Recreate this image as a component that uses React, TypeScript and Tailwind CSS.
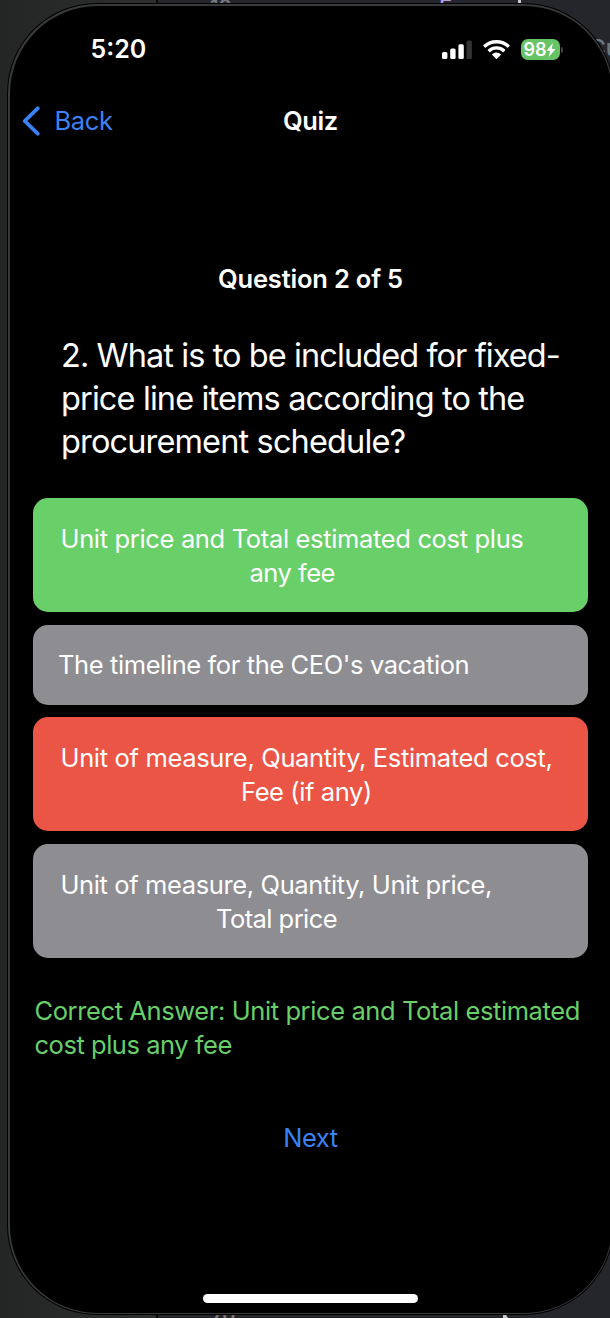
import React from "react";

type Line = { text: string; className: string };

function Lines({ lines }: { lines: Line[] }) {
  return (
    <>
      {lines.map((line) => (
        <span key={line.text} className={`block w-max whitespace-nowrap ${line.className}`}>
          {line.text}
        </span>
      ))}
    </>
  );
}

function Answer({ className, lines }: { className: string; lines: Line[] }) {
  return (
    <button
      className={`flex w-full flex-col justify-center rounded-[15px] pt-px text-[25.5px] leading-[34px] text-white ${className}`}
    >
      <Lines lines={lines} />
    </button>
  );
}

function Backdrop() {
  return (
    <div className="absolute inset-0 flex overflow-hidden">
      <div className="w-[156px] bg-linear-to-r from-[#242625] to-[#2d2f2e]" />
      <div className="w-[2px] bg-[#080809]" />
      <div className="flex-1 bg-[#25252c]" />
      <span className="absolute left-[210px] top-[-3px] text-[20px] leading-[20px] font-semibold text-[#77777d]">10</span>
      <span className="absolute left-[439px] top-[-3px] text-[22px] leading-[20px] font-medium text-[#b79be0]">Form</span>
      <span className="absolute left-[518px] top-0 h-[5px] w-[3px] bg-[#c9c9cc]" />
      <span className="absolute left-[589px] top-[37px] text-[23px] leading-[23px] font-medium text-[#6c7986]">Cu</span>
      <span className="absolute left-[211px] top-[1305px] text-[20px] leading-[20px] font-semibold text-[#77777d]">70</span>
      <svg className="absolute left-[502px] top-[1314px]" width="8" height="4" viewBox="0 0 8 4">
        <path d="M1 0H3.5L6 4H1Z" fill="#c9c9cc" />
      </svg>
    </div>
  );
}

function StatusBar() {
  return (
    <div className="flex h-[44px] items-center pt-[2px] pr-[49px] pl-[81px]">
      <span className="text-[25px] font-semibold tracking-[0px]">5:20</span>
      <div className="ml-auto flex items-center">
        <svg width="30" height="20" viewBox="0 0 30 20">
          <rect x="0" y="12" width="5.4" height="7" rx="1.5" fill="#fff" />
          <rect x="8.2" y="8.5" width="5.4" height="10.5" rx="1.5" fill="#fff" />
          <rect x="16.4" y="4.2" width="5.4" height="14.8" rx="1.5" fill="#fff" />
          <rect x="24.5" y="0.4" width="5.4" height="18.6" rx="1.5" fill="#333" />
        </svg>
        <svg className="ml-[11px]" width="27" height="20" viewBox="0 0 27 20">
          <path d="M13.5 0C8.4 0 3.8 1.9.4 5.1c-.3.3-.3.7 0 1l1.5 1.5c.3.3.7.3 1 0A15.3 15.3 0 0 1 13.5 3.5c4.1 0 7.8 1.5 10.6 4.1.3.3.7.3 1 0l1.5-1.5c.3-.3.3-.7 0-1C23.2 1.9 18.6 0 13.5 0Z" fill="#fff" />
          <path d="M13.5 6.2c-3.3 0-6.3 1.2-8.6 3.3-.3.3-.3.7 0 1l1.5 1.5c.3.3.7.3 1 0a9 9 0 0 1 12.2 0c.3.3.7.3 1 0l1.5-1.5c.3-.3.3-.7 0-1a12.8 12.8 0 0 0-8.6-3.3Z" fill="#fff" />
          <path d="M13.5 12.6c-1.6 0-3.1.6-4.2 1.5-.3.3-.3.7 0 1l3.7 3.7c.3.3.7.3 1 0l3.7-3.7c.3-.3.3-.7 0-1a6.6 6.6 0 0 0-4.2-1.5Z" fill="#fff" />
        </svg>
        <div className="ml-[11px] flex h-[21px] w-[39px] items-center justify-center rounded-[7px] bg-[#66c466]">
          <span className="text-[18px] leading-[21px] font-semibold tracking-[-0.1px]">98</span>
          <svg width="10" height="14" viewBox="0 0 9 14">
            <path d="M6.4 0 .2 7.4c-.3.3 0 .7.4.7h3L2.2 14l6.4-7.4c.3-.3 0-.7-.4-.7h-3Z" fill="#fff" />
          </svg>
        </div>
        <span className="ml-[1px] h-[6px] w-[2px] rounded-r-full bg-[#444]" />
      </div>
    </div>
  );
}

export default function App() {
  return (
    <div className="relative h-[1318px] w-[610px] overflow-hidden bg-[#25252c] font-['Inter',sans-serif] text-white">
      <Backdrop />
      <div className="relative ml-[7px] flex w-[607px] flex-col pt-[3px]">
        <div className="rounded-[90px] bg-black p-px">
          <div className="rounded-[89px] bg-[#393939] p-[1.5px]">
            <main className="flex h-[1307px] flex-col rounded-[87.5px] bg-black pt-[21px]">
              <StatusBar />
              <header className="mt-[25px] grid h-[50px] grid-cols-3 items-center px-[12px] text-[25.5px]">
                <button className="flex items-center text-[#3a82f6]">
                  <svg width="20" height="30" viewBox="0 0 20 30">
                    <path d="M15.7 2.3 2.7 15l13 12.7" fill="none" stroke="currentColor" strokeWidth="3.8" strokeLinecap="round" strokeLinejoin="round" />
                  </svg>
                  <span className="ml-[13px] pt-px tracking-[-0.35px]">Back</span>
                </button>
                <h1 className="pt-px text-center font-semibold tracking-[-0.4px]">Quiz</h1>
              </header>
              <section className="flex flex-col px-[23.5px]">
                <h2 className="mt-[116px] text-center text-[25.5px] leading-[34px] font-semibold tracking-[-0.2px]">Question 2 of 5</h2>
                <div className="mt-[38px] ml-[28px] text-[32.5px] leading-[43px]">
                  <Lines
                    lines={[
                      { text: "2. What is to be included for fixed-", className: "tracking-[-0.92px]" },
                      { text: "price line items according to the", className: "tracking-[-0.88px]" },
                      { text: "procurement schedule?", className: "tracking-[-0.86px]" },
                    ]}
                  />
                </div>
                <div className="mt-[35.5px] flex flex-col gap-[12.7px]">
                  <Answer
                    className="h-[114px] bg-[#68cf69]"
                    lines={[
                      { text: "Unit price and Total estimated cost plus", className: "ml-[27.5px] tracking-[-0.34px]" },
                      { text: "any fee", className: "ml-[216.5px] tracking-[-0.5px]" },
                    ]}
                  />
                  <Answer
                    className="h-[80px] bg-[#8e8d92]"
                    lines={[{ text: "The timeline for the CEO's vacation", className: "ml-[25px] tracking-[-0.4px]" }]}
                  />
                  <Answer
                    className="h-[114px] bg-[#eb5545]"
                    lines={[
                      { text: "Unit of measure, Quantity, Estimated cost,", className: "ml-[27.5px] tracking-[-0.34px]" },
                      { text: "Fee (if any)", className: "ml-[208px] tracking-[-0.4px]" },
                    ]}
                  />
                  <Answer
                    className="h-[114px] bg-[#8e8d92]"
                    lines={[
                      { text: "Unit of measure, Quantity, Unit price,", className: "ml-[27.5px] tracking-[-0.38px]" },
                      { text: "Total price", className: "ml-[183px] tracking-[-0.55px]" },
                    ]}
                  />
                </div>
                <div className="mt-[36px] ml-[1.5px] text-[25.5px] leading-[34px] text-[#68cf69]">
                  <Lines
                    lines={[
                      { text: "Correct Answer: Unit price and Total estimated", className: "tracking-[-0.4px]" },
                      { text: "cost plus any fee", className: "tracking-[-0.47px]" },
                    ]}
                  />
                </div>
                <button className="mt-[58.5px] self-center text-[25.5px] leading-[34px] tracking-[-0.5px] text-[#3a82f6]">Next</button>
              </section>
              <div className="mt-auto mb-[10px] ml-[193.5px] h-[8.5px] w-[215px] rounded-full bg-white" />
            </main>
          </div>
        </div>
      </div>
    </div>
  );
}
